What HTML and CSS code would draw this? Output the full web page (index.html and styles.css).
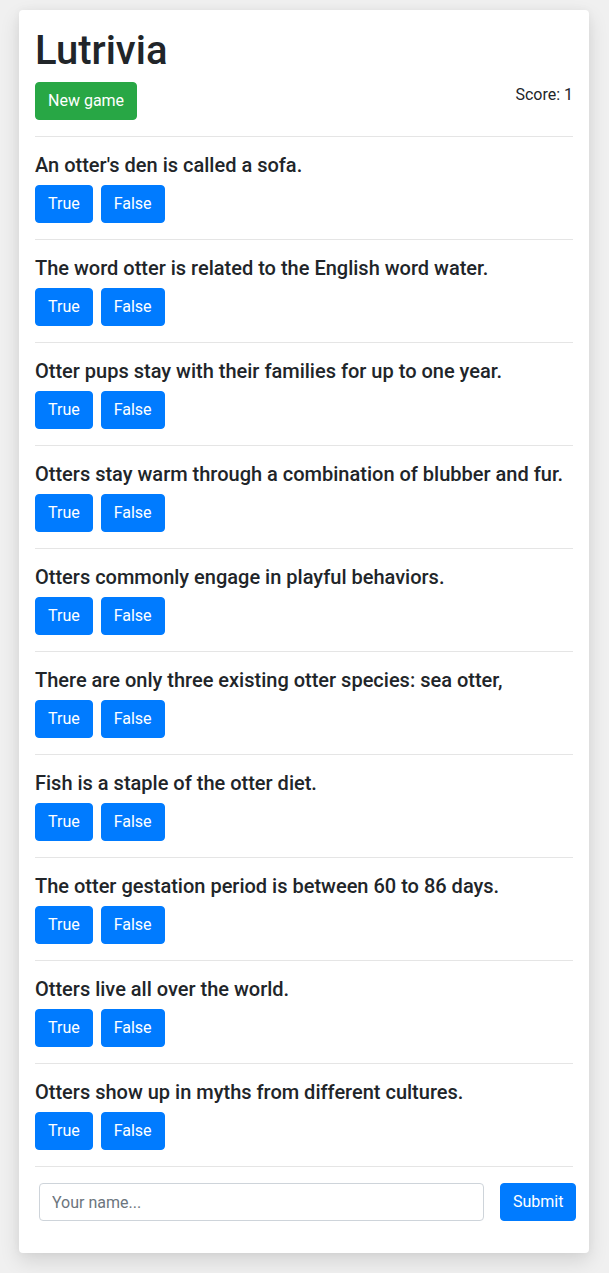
FILE: index.html
```html
<!DOCTYPE html>
<html lang="en">
<head>
<meta charset="utf-8">
<title>Lutrivia</title>
<link rel="stylesheet" href="styles.css">
</head>
<body>
<main class="card">
  <h1 class="title">Lutrivia</h1>
  <div class="toolbar">
    <button class="btn btn-green">New game</button>
    <span class="score">Score: 1</span>
  </div>
  <hr class="rule">
  <section class="question">
    <h5 class="q-text">An otter's den is called a sofa.</h5>
    <div class="answers"><button class="btn btn-blue">True</button><button class="btn btn-blue">False</button></div>
  </section>
  <hr class="rule">
  <section class="question">
    <h5 class="q-text">The word otter is related to the English word water.</h5>
    <div class="answers"><button class="btn btn-blue">True</button><button class="btn btn-blue">False</button></div>
  </section>
  <hr class="rule">
  <section class="question">
    <h5 class="q-text">Otter pups stay with their families for up to one year.</h5>
    <div class="answers"><button class="btn btn-blue">True</button><button class="btn btn-blue">False</button></div>
  </section>
  <hr class="rule">
  <section class="question">
    <h5 class="q-text">Otters stay warm through a combination of blubber and fur.</h5>
    <div class="answers"><button class="btn btn-blue">True</button><button class="btn btn-blue">False</button></div>
  </section>
  <hr class="rule">
  <section class="question">
    <h5 class="q-text">Otters commonly engage in playful behaviors.</h5>
    <div class="answers"><button class="btn btn-blue">True</button><button class="btn btn-blue">False</button></div>
  </section>
  <hr class="rule">
  <section class="question">
    <h5 class="q-text">There are only three existing otter species: sea otter,</h5>
    <div class="answers"><button class="btn btn-blue">True</button><button class="btn btn-blue">False</button></div>
  </section>
  <hr class="rule">
  <section class="question">
    <h5 class="q-text">Fish is a staple of the otter diet.</h5>
    <div class="answers"><button class="btn btn-blue">True</button><button class="btn btn-blue">False</button></div>
  </section>
  <hr class="rule">
  <section class="question">
    <h5 class="q-text">The otter gestation period is between 60 to 86 days.</h5>
    <div class="answers"><button class="btn btn-blue">True</button><button class="btn btn-blue">False</button></div>
  </section>
  <hr class="rule">
  <section class="question">
    <h5 class="q-text">Otters live all over the world.</h5>
    <div class="answers"><button class="btn btn-blue">True</button><button class="btn btn-blue">False</button></div>
  </section>
  <hr class="rule">
  <section class="question">
    <h5 class="q-text">Otters show up in myths from different cultures.</h5>
    <div class="answers"><button class="btn btn-blue">True</button><button class="btn btn-blue">False</button></div>
  </section>
  <hr class="rule">
  <form class="submit-row" onsubmit="return false">
    <input class="name-input" type="text" placeholder="Your name...">
    <button class="btn btn-blue" type="submit">Submit</button>
  </form>
</main>
</body>
</html>
```

FILE: styles.css
```css
* { box-sizing: border-box; }
html, body { margin: 0; }
body {
  background: #f0f0f0;
  font-family: Roboto, "Liberation Sans", sans-serif;
  font-size: 16px;
  line-height: 1.5;
  color: #212529;
  padding: 10px 20px 20px 19px;
}
.card {
  background: #fff;
  border-radius: 4px;
  padding: 16px;
  box-shadow: 0 8px 20px rgba(0,0,0,0.12), 0 0 8px rgba(0,0,0,0.04);
}
.title {
  margin: 0 0 8px;
  padding-top: 1px;
  font-size: 40px;
  font-weight: 500;
  line-height: 47px;
}
.toolbar {
  display: flex;
  justify-content: space-between;
  align-items: flex-start;
}
.score { line-height: 24px; padding-top: 1px; }
.rule {
  margin: 16px 0;
  border: 0;
  border-top: 1px solid rgba(0,0,0,0.1);
}
.q-text {
  margin: 0 0 8px;
  padding-top: 1px;
  font-size: 20px;
  font-weight: 500;
  line-height: 23px;
}
.answers { display: flex; gap: 8px; }
.btn {
  font-family: inherit;
  font-size: 16px;
  line-height: 1.5;
  padding: 6px 12px;
  border: 1px solid transparent;
  border-radius: 4px;
  color: #fff;
  cursor: pointer;
}
.btn-blue { background: #007bff; border-color: #007bff; }
.btn-green { background: #28a745; border-color: #28a745; }
.submit-row {
  display: flex;
  gap: 16px;
  padding-left: 4px;
  margin-right: -4px;
  margin-bottom: 16px;
}
.name-input {
  width: 445px;
  height: 38px;
  padding: 6px 12px;
  font-family: inherit;
  font-size: 16px;
  color: #495057;
  border: 1px solid #ced4da;
  border-radius: 4px;
}
.name-input::placeholder { color: #6c757d; }
```
